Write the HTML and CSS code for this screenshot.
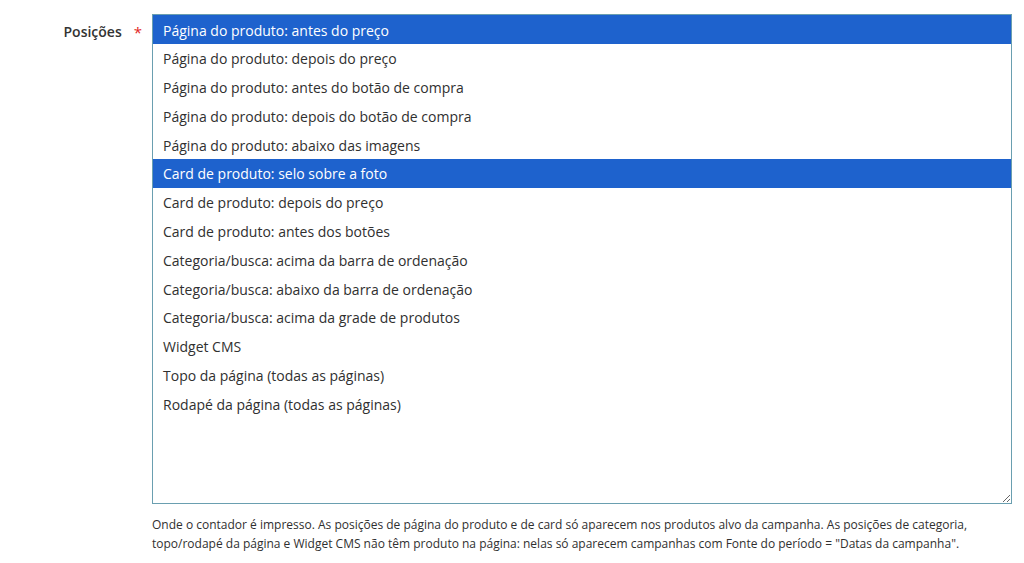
FILE: index.html
```html
<!DOCTYPE html>
<html lang="pt-BR">
<head>
<meta charset="utf-8">
<title>Posições</title>
<link rel="stylesheet" href="styles.css">
</head>
<body>
<div class="field">
  <div class="label-col">
    <span class="label">Posições</span><span class="req">*</span>
  </div>
  <div class="control">
    <div class="multiselect">
      <div class="opt selected">Página do produto: antes do preço</div>
      <div class="opt">Página do produto: depois do preço</div>
      <div class="opt">Página do produto: antes do botão de compra</div>
      <div class="opt">Página do produto: depois do botão de compra</div>
      <div class="opt">Página do produto: abaixo das imagens</div>
      <div class="opt selected">Card de produto: selo sobre a foto</div>
      <div class="opt">Card de produto: depois do preço</div>
      <div class="opt">Card de produto: antes dos botões</div>
      <div class="opt">Categoria/busca: acima da barra de ordenação</div>
      <div class="opt">Categoria/busca: abaixo da barra de ordenação</div>
      <div class="opt">Categoria/busca: acima da grade de produtos</div>
      <div class="opt">Widget CMS</div>
      <div class="opt">Topo da página (todas as páginas)</div>
      <div class="opt">Rodapé da página (todas as páginas)</div>
    </div>
    <div class="note">Onde o contador é impresso. As posições de página do produto e de card só aparecem nos produtos alvo da campanha. As posições de categoria, topo/rodapé da página e Widget CMS não têm produto na página: nelas só aparecem campanhas com Fonte do período = "Datas da campanha".</div>
  </div>
</div>
</body>
</html>
```
FILE: styles.css
```css
html, body {
  margin: 0;
  padding: 0;
  background: #ffffff;
}
body {
  font-family: "Open Sans", "Liberation Sans", sans-serif;
  color: #303030;
}
.field {
  display: flex;
  padding-top: 14px;
}
.label-col {
  width: 152px;
  flex: none;
  display: flex;
  justify-content: flex-end;
  align-items: flex-start;
  padding-top: 8px;
  padding-right: 10px;
  box-sizing: border-box;
}
.label {
  font-size: 14px;
  font-weight: 600;
  line-height: 20px;
  color: #333333;
}
.req {
  color: #e22626;
  font-size: 15px;
  line-height: 20px;
  margin-left: 12px;
}
.control {
  width: 860px;
  flex: none;
}
.multiselect {
  height: 490px;
  box-sizing: border-box;
  border: 1px solid #6a9fb0;
  padding: 0;
  overflow: auto;
  resize: vertical;
  background: #fff;
}
.opt {
  box-sizing: border-box;
  font-size: 14px;
  height: 28.8px;
  padding-top: 2.5px;
  line-height: 26.3px;
  padding-left: 10px;
  color: #303030;
  white-space: nowrap;
}
.opt.selected {
  background: #1e62cd;
  color: #ffffff;
}
.note {
  font-size: 12px;
  line-height: 18.5px;
  color: #303030;
  margin-top: 12px;
  padding-right: 40px;
}
```
